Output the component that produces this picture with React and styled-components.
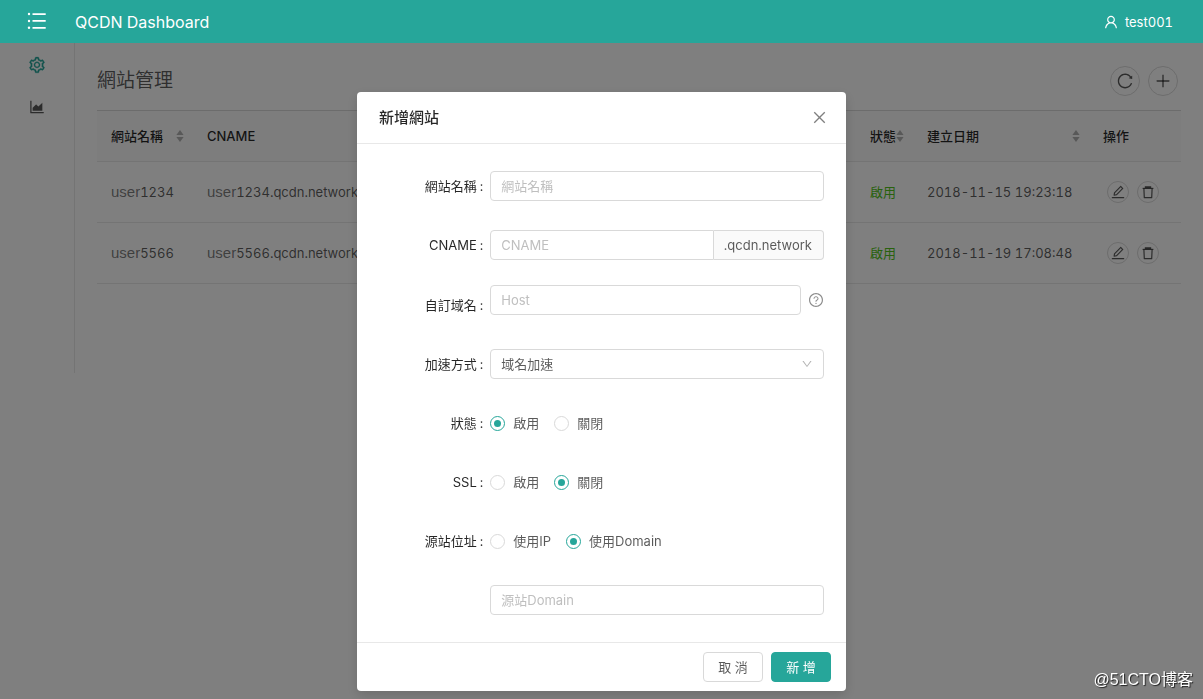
import React, { useState } from 'react';
import styled, { createGlobalStyle, css } from 'styled-components';
import {
  AiOutlineUser,
  AiOutlineSetting,
  AiOutlineAreaChart,
  AiOutlineReload,
  AiOutlinePlus,
  AiOutlineEdit,
  AiOutlineClose,
  AiOutlineQuestionCircle,
  AiOutlineDown,
} from 'react-icons/ai';

const primary = '#26a69a';
const text = 'rgba(0, 0, 0, 0.65)';
const heading = 'rgba(0, 0, 0, 0.85)';
const border = '#d9d9d9';
const divider = '#e8e8e8';

const GlobalStyle = createGlobalStyle`
  * {
    box-sizing: border-box;
  }
  body {
    margin: 0;
    background: #fff;
    color: ${text};
    font: 13px/20px Inter, 'Noto Sans CJK TC', sans-serif;
    font-feature-settings: 'tnum';
  }
  button, input, select {
    font: inherit;
    font-feature-settings: inherit;
    color: inherit;
  }
  svg {
    display: block;
  }
`;

const Header = styled.header`
  position: sticky;
  top: 0;
  z-index: 20;
  display: flex;
  align-items: center;
  height: 43px;
  padding: 0 30px 0 27px;
  background: ${primary};
  color: #fff;
`;
const MenuButton = styled.button`
  padding: 0;
  border: 0;
  background: none;
  margin-bottom: 2px;
`;
const Brand = styled.h1`
  flex: 1;
  margin: 0 0 0 28px;
  font-size: 16px;
  font-weight: 400;
`;
const Account = styled.a`
  display: flex;
  align-items: center;
  gap: 6px;
  color: inherit;
  text-decoration: none;

  svg {
    font-size: 16px;
  }
`;

const Layout = styled.div`
  display: flex;
`;
const Sidebar = styled.nav`
  display: flex;
  flex-direction: column;
  align-items: center;
  gap: 24px;
  width: 75px;
  min-height: 330px;
  padding-top: 13px;
  border-right: 1px solid ${divider};
`;
const SidebarLink = styled.a`
  font-size: 18px;
  color: ${({ $active }) => ($active ? primary : text)};

  svg {
    stroke-width: ${({ $active }) => ($active ? 20 : 0)};
  }
`;
const Content = styled.main`
  flex: 1;
  min-width: 0;
  padding: 23px 22px 0;
`;
const TitleBar = styled.div`
  display: flex;
  align-items: center;
  justify-content: space-between;
  height: 30px;
  margin-bottom: 14px;
  padding-right: 3px;
`;
const Title = styled.h2`
  margin: 0;
  font-size: 19px;
  font-weight: 400;
`;
const Actions = styled.div`
  display: flex;
  gap: 8px;
`;
const CircleButton = styled.button`
  display: flex;
  align-items: center;
  justify-content: center;
  width: ${({ $small }) => ($small ? 22 : 30)}px;
  height: ${({ $small }) => ($small ? 22 : 30)}px;
  padding: 0;
  border: 1px solid ${border};
  border-radius: 50%;
  background: #fff;
  font-size: ${({ $small }) => ($small ? 16 : 18)}px;
`;

const Table = styled.table`
  width: 100%;
  table-layout: fixed;
  border-collapse: separate;
  border-spacing: 0;
  border-top: 1px solid ${border};
`;
const Col = styled.col`
  width: ${({ $width }) => $width};
`;
const Th = styled.th`
  height: 51px;
  padding: 0 9px 0 14px;
  border-bottom: 1px solid ${divider};
  background: #fafafa;
  color: ${heading};
  font-weight: 500;
  text-align: left;
`;
const ThInner = styled.div`
  display: flex;
  align-items: center;
  justify-content: space-between;
  white-space: nowrap;
`;
const Td = styled.td`
  height: 61px;
  padding: 0 0 0 14px;
  border-bottom: 1px solid ${divider};
  white-space: nowrap;
`;
const UserPart = styled.span`
  font-family: 'Liberation Sans', sans-serif;
  font-size: 15px;
  opacity: 0.8;
`;
const Enabled = styled.span`
  color: #52c41a;
`;
const RowActions = styled(Actions)`
  padding-left: 4px;
`;

const Mask = styled.div`
  position: fixed;
  inset: 0;
  z-index: 10;
  display: flex;
  align-items: flex-start;
  justify-content: center;
  padding: 92px 16px 8px;
  overflow: auto;
  background: rgba(0, 0, 0, 0.5);
`;
const Modal = styled.form`
  width: 100%;
  max-width: 489px;
  border-radius: 4px;
  background: #fff;
  box-shadow: 0 4px 12px rgba(0, 0, 0, 0.15);
`;
const ModalHeader = styled.div`
  display: flex;
  align-items: center;
  justify-content: space-between;
  height: 52px;
  padding: 0 18px 0 22px;
  border-bottom: 1px solid ${divider};
`;
const ModalTitle = styled.h3`
  margin: 0;
  color: ${heading};
  font-size: 15px;
  font-weight: 500;
`;
const CloseButton = styled.button`
  padding: 0;
  border: 0;
  background: none;
  color: rgba(0, 0, 0, 0.5);
  font-size: 17px;
`;
const ModalBody = styled.div`
  display: flex;
  flex-direction: column;
  gap: 21px;
  padding: 23px 22px;
`;
const ModalFooter = styled.div`
  display: flex;
  justify-content: flex-end;
  gap: 8px;
  padding: 9px 15px;
  border-top: 1px solid ${divider};
`;
const Button = styled.button`
  width: 60px;
  height: 30px;
  padding: 0;
  border: 1px solid ${({ $primary }) => ($primary ? primary : border)};
  border-radius: 4px;
  background: ${({ $primary }) => ($primary ? primary : '#fff')};
  color: ${({ $primary }) => ($primary ? '#fff' : text)};
`;

const Row = styled.div`
  display: grid;
  grid-template-columns: minmax(0, 1fr) minmax(0, 3fr);
  align-items: center;
  min-height: ${({ $tall }) => ($tall ? 39 : 38)}px;
`;
const Label = styled.div`
  padding-right: 7px;
  color: ${heading};
  text-align: right;

  &::after {
    content: ':';
    margin-left: 3px;
  }
`;
const Control = styled.div`
  grid-column: 2;
  display: flex;
  align-items: center;
  align-self: ${({ $top }) => ($top ? 'start' : 'center')};
  gap: ${({ $gap }) => $gap || 0}px;
`;
const field = css`
  flex: 1;
  min-width: 0;
  height: 30px;
  padding: 0 10px;
  border: 1px solid ${border};
  border-radius: 4px;
  background: #fff;
  outline: 0;
`;
const Input = styled.input`
  ${field}

  &::placeholder {
    color: #bfbfbf;
  }
  ${({ $joined }) => $joined && 'border-radius: 4px 0 0 4px;'}
`;
const Addon = styled.span`
  height: 30px;
  padding: 4px 11px 4px 10px;
  border: 1px solid ${border};
  border-left: 0;
  border-radius: 0 4px 4px 0;
  background: #fafafa;
`;
const SelectBox = styled.div`
  display: grid;
  flex: 1;
  align-items: center;

  > * {
    grid-area: 1 / 1;
  }
  > svg {
    justify-self: end;
    margin-right: 11px;
    color: rgba(0, 0, 0, 0.3);
    font-size: 12px;
    pointer-events: none;
  }
`;
const Select = styled.select`
  ${field}
  appearance: none;
`;
const Help = styled.button`
  padding: 0;
  border: 0;
  background: none;
  color: rgba(0, 0, 0, 0.45);
  font-size: 16px;
`;
const RadioLabel = styled.label`
  display: flex;
  align-items: center;
  gap: 8px;
`;
const Radio = styled.input`
  appearance: none;
  display: grid;
  place-items: center;
  width: 15px;
  height: 15px;
  margin: 0;
  border: 1px solid ${border};
  border-radius: 50%;

  &:checked {
    border-color: ${primary};
  }
  &:checked::before {
    content: '';
    width: 7px;
    height: 7px;
    border-radius: 50%;
    background: ${primary};
  }
`;

const Watermark = styled.div`
  position: fixed;
  right: 10px;
  bottom: 9px;
  z-index: 30;
  color: #fff;
  font-family: 'Liberation Sans', 'Noto Sans CJK SC', sans-serif;
  font-size: 16px;
  text-shadow: 1px 1px 1px #222;
`;

const MenuIcon = () => (
  <svg width="20" height="18" viewBox="0 0 20 18" fill="currentColor">
    <path d="M5.5 1.2h13.2v1.7H5.5zM5.5 8.1h13.2v1.7H5.5zM5.5 15h13.2v1.7H5.5z" />
    <circle cx="2" cy="2" r="1.2" />
    <circle cx="2" cy="9" r="1.2" />
    <circle cx="2" cy="15.8" r="1.2" />
  </svg>
);

const TrashIcon = () => (
  <svg width="16" height="16" viewBox="0 0 16 16" fill="none" stroke="currentColor">
    <path d="M2.6 4.4h10.8" strokeWidth="1.2" />
    <path d="M4.8 4.2V2.2h6.4v2z" fill="currentColor" stroke="none" />
    <path d="M3.9 4.6l0.4 9h7.4l0.4-9" strokeWidth="1.2" strokeLinejoin="round" />
  </svg>
);

const Sorter = () => (
  <svg width="8" height="14" viewBox="0 0 8 14" fill="#b0b0b0">
    <path d="M4 1 L7.6 6 H0.4 Z" />
    <path d="M4 13 L7.6 8 H0.4 Z" />
  </svg>
);

const sites = [
  { id: '1234', createdAt: '2018-11-15 19:23:18' },
  { id: '5566', createdAt: '2018-11-19 17:08:48' },
];

const columns = [
  { key: 'name', title: '網站名稱', width: '96px', sortable: true },
  { key: 'cname', title: 'CNAME', width: 'auto' },
  { key: 'status', title: '狀態', width: '57px', sortable: true },
  { key: 'createdAt', title: '建立日期', width: '176px', sortable: true },
  { key: 'action', title: '操作', width: '92px' },
];

const SiteTable = () => (
  <Table>
    <colgroup>
      {columns.map((column) => (
        <Col key={column.key} $width={column.width} />
      ))}
    </colgroup>
    <thead>
      <tr>
        {columns.map((column) => (
          <Th key={column.key}>
            <ThInner>
              {column.title}
              {column.sortable && <Sorter />}
            </ThInner>
          </Th>
        ))}
      </tr>
    </thead>
    <tbody>
      {sites.map((site) => (
        <tr key={site.id}>
          <Td><UserPart>user</UserPart>{site.id}</Td>
          <Td><UserPart>user</UserPart>{site.id}.qcdn.network</Td>
          <Td><Enabled>啟用</Enabled></Td>
          <Td>{site.createdAt}</Td>
          <Td>
            <RowActions>
              <CircleButton $small aria-label="編輯"><AiOutlineEdit /></CircleButton>
              <CircleButton $small aria-label="刪除"><TrashIcon /></CircleButton>
            </RowActions>
          </Td>
        </tr>
      ))}
    </tbody>
  </Table>
);

const RadioRow = ({ name, label, options, initial }) => {
  const [value, setValue] = useState(initial);

  return (
    <Row role="radiogroup" aria-labelledby={`${name}-label`}>
      <Label id={`${name}-label`}>{label}</Label>
      <Control $gap={15}>
        {options.map((option) => (
          <RadioLabel key={option}>
            <Radio
              type="radio"
              name={name}
              checked={value === option}
              onChange={() => setValue(option)}
            />
            {option}
          </RadioLabel>
        ))}
      </Control>
    </Row>
  );
};

const SiteModal = () => (
  <Mask>
    <Modal role="dialog" aria-labelledby="modal-title" onSubmit={(e) => e.preventDefault()}>
      <ModalHeader>
        <ModalTitle id="modal-title">新增網站</ModalTitle>
        <CloseButton type="button" aria-label="關閉"><AiOutlineClose /></CloseButton>
      </ModalHeader>
      <ModalBody>
        <Row>
          <Label as="label" htmlFor="name">網站名稱</Label>
          <Control>
            <Input id="name" placeholder="網站名稱" />
          </Control>
        </Row>
        <Row>
          <Label as="label" htmlFor="cname">CNAME</Label>
          <Control>
            <Input id="cname" placeholder="CNAME" $joined />
            <Addon>.qcdn.network</Addon>
          </Control>
        </Row>
        <Row $tall>
          <Label as="label" htmlFor="host">自訂域名</Label>
          <Control $top $gap={7}>
            <Input id="host" placeholder="Host" />
            <Help type="button" aria-label="說明"><AiOutlineQuestionCircle /></Help>
          </Control>
        </Row>
        <Row>
          <Label as="label" htmlFor="mode">加速方式</Label>
          <Control>
            <SelectBox>
              <Select id="mode">
                <option>域名加速</option>
              </Select>
              <AiOutlineDown />
            </SelectBox>
          </Control>
        </Row>
        <RadioRow name="status" label="狀態" options={['啟用', '關閉']} initial="啟用" />
        <RadioRow name="ssl" label="SSL" options={['啟用', '關閉']} initial="關閉" />
        <RadioRow name="origin" label="源站位址" options={['使用IP', '使用Domain']} initial="使用Domain" />
        <Row>
          <Control>
            <Input aria-label="源站Domain" placeholder="源站Domain" />
          </Control>
        </Row>
      </ModalBody>
      <ModalFooter>
        <Button type="button">取 消</Button>
        <Button type="submit" $primary>新 增</Button>
      </ModalFooter>
    </Modal>
  </Mask>
);

const App = () => (
  <>
    <GlobalStyle />
    <Header>
      <MenuButton aria-label="選單"><MenuIcon /></MenuButton>
      <Brand>QCDN Dashboard</Brand>
      <Account href="#account"><AiOutlineUser />test001</Account>
    </Header>
    <Layout>
      <Sidebar>
        <SidebarLink href="#sites" aria-label="網站管理" $active><AiOutlineSetting /></SidebarLink>
        <SidebarLink href="#stats" aria-label="統計"><AiOutlineAreaChart /></SidebarLink>
      </Sidebar>
      <Content>
        <TitleBar>
          <Title>網站管理</Title>
          <Actions>
            <CircleButton aria-label="重新整理"><AiOutlineReload /></CircleButton>
            <CircleButton aria-label="新增"><AiOutlinePlus /></CircleButton>
          </Actions>
        </TitleBar>
        <SiteTable />
      </Content>
    </Layout>
    <SiteModal />
    <Watermark>@51CTO博客</Watermark>
  </>
);

export default App;
